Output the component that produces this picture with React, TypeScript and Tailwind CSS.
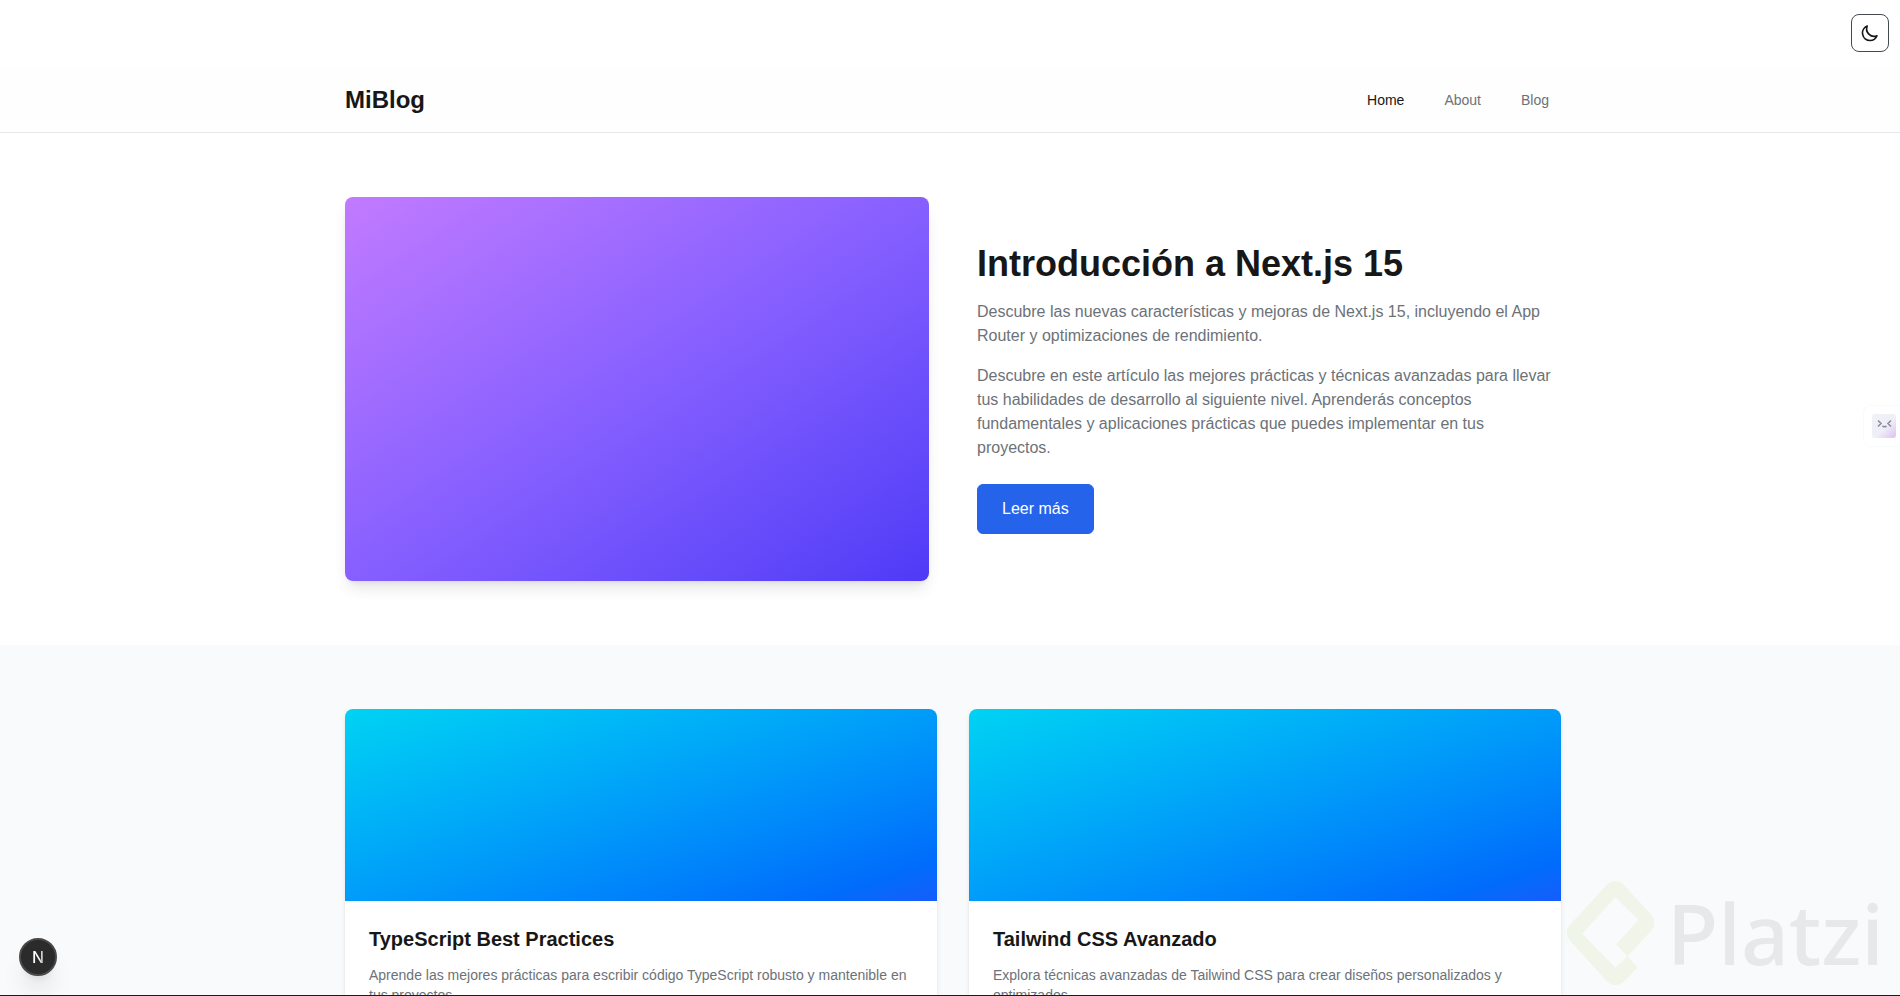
import { useState } from "react";

interface Post {
  title: string;
  excerpt: string;
}

const navigationItems = [
  { href: "#home", label: "Home" },
  { href: "#about", label: "About" },
  { href: "#blog", label: "Blog" },
];

const posts: Post[] = [
  {
    title: "TypeScript Best Practices",
    excerpt:
      "Aprende las mejores prácticas para escribir código TypeScript robusto y mantenible en tus proyectos.",
  },
  {
    title: "Tailwind CSS Avanzado",
    excerpt:
      "Explora técnicas avanzadas de Tailwind CSS para crear diseños personalizados y optimizados.",
  },
];

function MoonIcon() {
  return (
    <svg className="h-5 w-5" fill="none" stroke="currentColor" strokeWidth={2} viewBox="0 0 24 24" aria-hidden="true">
      <path
        strokeLinecap="round"
        strokeLinejoin="round"
        d="M20.354 15.354A9 9 0 018.646 3.646 9.003 9.003 0 0012 21a9.003 9.003 0 008.354-5.646z"
      />
    </svg>
  );
}

function PostCard({ post }: { post: Post }) {
  return (
    <article className="overflow-hidden rounded-lg bg-white shadow-md">
      <div className="h-48 bg-linear-to-br from-cyan-400 to-blue-600" />
      <div className="p-6">
        <h2 className="mb-3 text-xl font-bold">{post.title}</h2>
        <p className="text-sm text-[#6c7278]">{post.excerpt}</p>
      </div>
    </article>
  );
}

function Watermark() {
  return (
    <div className="pointer-events-none fixed right-4 bottom-2.5 flex items-center gap-3">
      <svg className="h-[106px] w-[89px] text-[#eff5e8]" viewBox="76 60 269 320" fill="currentColor" aria-hidden="true">
        <path d="M262 290 L335 212 Q352 187 333 164 L248 72 Q225 53 202 72 L88 195 Q68 220 88 243 L198 364 Q225 390 252 366 L292 325 L262 290 L225 325 L125 222 L225 112 L295 180 L228 255 Z" />
      </svg>
      <span className="font-['Noto_Sans',sans-serif] text-[84px] leading-none font-medium text-[#e7e8ea]">
        Platzi
      </span>
    </div>
  );
}

function AssistantTab() {
  return (
    <button
      type="button"
      aria-label="Asistente"
      className="fixed top-[405px] right-0 rounded-l-lg border border-r-0 border-gray-50 bg-white py-2 pr-1 pl-2"
    >
      <svg className="h-6 w-6" viewBox="0 0 24 24" fill="none" aria-hidden="true">
        <defs>
          <linearGradient id="face" x1="0" y1="0" x2="1" y2="1">
            <stop offset="0" stopColor="#eef3f6" />
            <stop offset="0.55" stopColor="#f0eef8" />
            <stop offset="1" stopColor="#dcc0f2" />
          </linearGradient>
        </defs>
        <rect width="24" height="24" rx="3" fill="url(#face)" />
        <path d="M6 6.5 L9 9.5 L6 12.5 M19 6.5 L16 9.5 L19 12.5 M10.5 12 Q12.5 13.5 14.5 12" stroke="#8b8f99" strokeWidth="1.6" />
      </svg>
    </button>
  );
}

export default function App() {
  const [active, setActive] = useState("Home");

  return (
    <div className="h-screen overflow-hidden bg-white font-['Liberation_Sans',Arial,sans-serif] text-[#171717]">
      {/* Theme toggle */}
      <div className="flex justify-end pt-3.5 pr-[11px] pb-4">
        <button type="button" aria-label="Cambiar tema" className="rounded-lg border border-[#454a50] p-2">
          <MoonIcon />
        </button>
      </div>

      {/* Header */}
      <header className="border-b border-gray-200 bg-[#fefefe] pl-1.5">
        <div className="mx-auto flex h-16 max-w-7xl items-center justify-between px-8">
          <a href="#home" className="text-2xl font-bold">
            MiBlog
          </a>
          <nav className="flex gap-4">
            {navigationItems.map((item) => (
              <a
                key={item.href}
                href={item.href}
                onClick={() => setActive(item.label)}
                className={`px-3 py-2 text-sm ${active === item.label ? "text-[#171717]" : "text-[#6c7278]"}`}
              >
                {item.label}
              </a>
            ))}
          </nav>
        </div>
      </header>

      <main>
        {/* Featured post */}
        <section className="py-16 pl-1.5">
          <div className="mx-auto grid max-w-7xl grid-cols-2 items-center gap-12 px-8">
            <div className="h-96 rounded-lg bg-linear-to-br from-purple-400 to-indigo-600 shadow-lg" />
            <div>
              <h1 className="mb-4 text-4xl font-bold">Introducción a Next.js 15</h1>
              <p className="mb-4 text-[#6c7278]">
                Descubre las nuevas características y mejoras de Next.js 15, incluyendo el App Router y optimizaciones
                de rendimiento.
              </p>
              <p className="mb-6 text-[#6c7278]">
                Descubre en este artículo las mejores prácticas y técnicas avanzadas para llevar tus habilidades de
                desarrollo al siguiente nivel. Aprenderás conceptos fundamentales y aplicaciones prácticas que puedes
                implementar en tus proyectos.
              </p>
              <button type="button" className="block rounded-md border border-[#2563eb] bg-[#2563eb] px-6 py-3 text-white">
                Leer más
              </button>
            </div>
          </div>
        </section>

        {/* Posts */}
        <section className="bg-gray-50 py-16 pl-1.5">
          <div className="mx-auto grid max-w-7xl grid-cols-2 gap-8 px-8">
            {posts.map((post) => (
              <PostCard key={post.title} post={post} />
            ))}
          </div>
        </section>
      </main>

      <AssistantTab />
      <Watermark />

      {/* Dev tools badge */}
      <button
        type="button"
        aria-label="Next.js Dev Tools"
        className="fixed bottom-5 left-[19px] flex h-[38px] w-[38px] items-center justify-center rounded-full border-2 border-[#4a4a4a] bg-[#2b2b2b] shadow-xl"
      >
        <span className="bg-linear-to-r from-white from-60% to-gray-400 bg-clip-text font-['Inter',sans-serif] text-base leading-none font-medium text-transparent">
          N
        </span>
      </button>

      <div className="fixed inset-x-0 bottom-0 h-px bg-[#1c1c1f]" />
    </div>
  );
}
